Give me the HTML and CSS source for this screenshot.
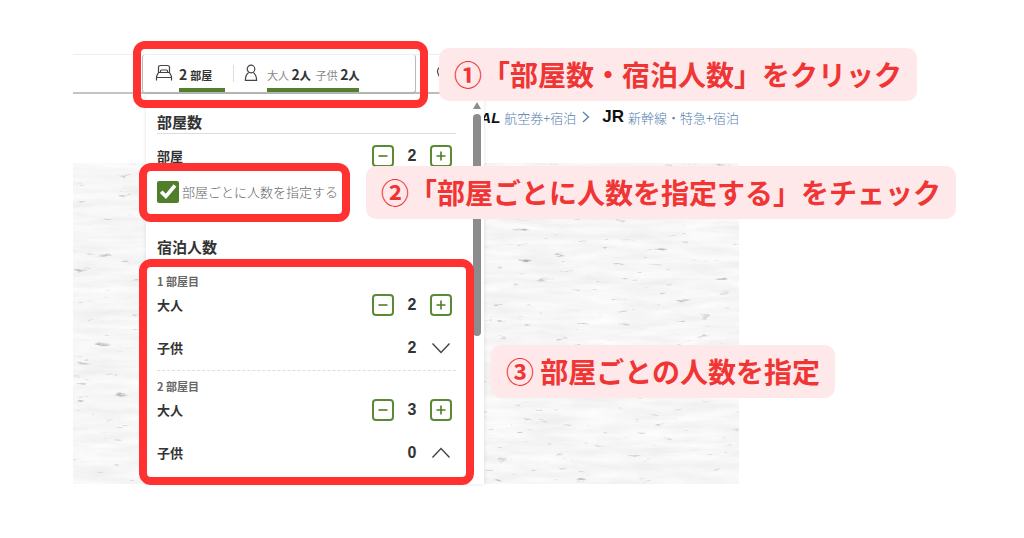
FILE: index.html
```html
<!DOCTYPE html>
<html lang="ja">
<head>
  <meta charset="UTF-8">
  <title>部屋数・宿泊人数の指定方法</title>
  <meta name="viewport" content="width=device-width, initial-scale=1.0">
  <link rel="stylesheet" href="styles.css">
</head>
<body>

  <main class="guide">
    <div class="site">
      <div class="search-bar">
        <button class="guest-field" type="button">
          <svg class="icon-bed" viewBox="0 0 18 18" width="18" height="18">
            <path d="M3.500 9V3.500Q3.500 1.500 5.500 1.500h7q2 0 2 2V9M5.500 8.500V7Q5.500 6 6.500 6h5q1 0 1 1v1.500M3.500 8.500h11l2 4v4M3.500 8.500l-2 4v4M1.500 13.500h15"/>
          </svg>
          <span class="rooms"><b>2</b> <strong>部屋</strong></span>
          <span class="divider"></span>
          <svg class="icon-person" viewBox="0 0 14 18" width="14" height="18">
            <circle cx="7" cy="5" r="3.800"/>
            <path d="M4.700 8.600Q1.400 11 1.400 16.400h11.200Q12.600 11 9.300 8.600"/>
          </svg>
          <span class="guests">大人 <b>2<strong>人</strong></b>&nbsp; 子供 <b>2<strong>人</strong></b></span>
        </button>
        <svg class="icon-pin" viewBox="0 0 14 18" width="14" height="18">
          <path d="M7 16.500Q1.500 9.500 1.500 6.500a5.500 5.500 0 0 1 11 0Q12.500 9.500 7 16.500z"/>
        </svg>
      </div>

      <nav class="plan-links">
        <a href="#"><b class="jal">JAL</b>航空券+宿泊
          <svg class="icon-next" viewBox="0 0 8 14" width="8" height="14"><path d="M1 2l5.500 5L1 12"/></svg>
        </a>
        <a href="#"><b class="jr">JR</b>新幹線・特急+宿泊</a>
      </nav>

      <svg class="wall" aria-hidden="true">
        <filter id="plaster" x="0" y="0" width="100%" height="100%" color-interpolation-filters="sRGB">
          <feTurbulence type="fractalNoise" baseFrequency="0.02 0.13" numOctaves="4" seed="8"/>
          <feColorMatrix type="matrix" values="0.08 0 0 0 0.925  0.08 0 0 0 0.925  0.08 0 0 0 0.925  0 0 0 0 1" result="base"/>
          <feTurbulence type="fractalNoise" baseFrequency="0.05 0.2" numOctaves="5" seed="21"/>
          <feColorMatrix type="matrix" values="0 0 0 0 0.65  0 0 0 0 0.65  0 0 0 0 0.65  4 0 0 0 -2.85" result="cracks"/>
          <feMerge>
            <feMergeNode in="base"/>
            <feMergeNode in="cracks"/>
          </feMerge>
        </filter>
        <rect width="100%" height="100%" filter="url(#plaster)"/>
      </svg>

      <section class="panel">
        <div class="panel-body">
          <h2>部屋数</h2>
          <div class="row">
            <span>部屋</span>
            <button class="step" type="button" aria-label="部屋を減らす"><svg viewBox="0 0 18 18"><path d="M4.500 9h9"/></svg></button>
            <output>2</output>
            <button class="step" type="button" aria-label="部屋を増やす"><svg viewBox="0 0 18 18"><path d="M4.500 9h9M9 4.500v9"/></svg></button>
          </div>
          <label class="check">
            <input type="checkbox" checked>
            <span>部屋ごとに人数を指定する</span>
          </label>

          <h2 class="guests-title">宿泊人数</h2>
          <div class="room">
            <h3>1 部屋目</h3>
            <div class="row adult">
              <span>大人</span>
              <button class="step" type="button" aria-label="大人を減らす"><svg viewBox="0 0 18 18"><path d="M4.500 9h9"/></svg></button>
              <output>2</output>
              <button class="step" type="button" aria-label="大人を増やす"><svg viewBox="0 0 18 18"><path d="M4.500 9h9M9 4.500v9"/></svg></button>
            </div>
            <div class="row">
              <span>子供</span>
              <output>2</output>
              <button class="toggle" type="button" aria-label="子供を開く"><svg viewBox="0 0 22 22"><path d="M2.500 6.500l8.500 9 8.500-9"/></svg></button>
            </div>
          </div>
          <div class="room">
            <h3>2 部屋目</h3>
            <div class="row adult">
              <span>大人</span>
              <button class="step" type="button" aria-label="大人を減らす"><svg viewBox="0 0 18 18"><path d="M4.500 9h9"/></svg></button>
              <output>3</output>
              <button class="step" type="button" aria-label="大人を増やす"><svg viewBox="0 0 18 18"><path d="M4.500 9h9M9 4.500v9"/></svg></button>
            </div>
            <div class="row">
              <span>子供</span>
              <output>0</output>
              <button class="toggle" type="button" aria-label="子供を閉じる"><svg viewBox="0 0 22 22"><path d="M2.500 15.500l8.500-9 8.500 9"/></svg></button>
            </div>
          </div>
        </div>
        <div class="scrollbar">
          <svg viewBox="0 0 8 7" width="8" height="7"><path d="M4 0l4 7H0z"/></svg>
          <div class="thumb"></div>
        </div>
      </section>
    </div>

    <!-- 赤枠 -->
    <div class="frame frame-1"></div>
    <div class="frame frame-2"></div>
    <div class="frame frame-3"></div>

    <!-- 説明 -->
    <p class="note note-1">①「部屋数・宿泊人数」をクリック</p>
    <p class="note note-2">②「部屋ごとに人数を指定する」をチェック</p>
    <p class="note note-3">③ 部屋ごとの人数を指定</p>
  </main>

</body>
</html>
```
FILE: styles.css
```css
* {
  box-sizing: border-box;
}

body {
  margin: 0;
  background-color: #fff;
  color: #333;
  font-family: "Noto Sans CJK JP", sans-serif;
}

h2, h3, p {
  margin: 0;
}

button {
  padding: 0;
  border: none;
  background: none;
  color: inherit;
  font-family: inherit;
}

svg {
  fill: none;
}

.guide {
  position: relative;
  display: flex;
  min-height: 100vh;
  padding: 54px 73px;
}

.site {
  position: relative;
  display: flex;
  flex-direction: column;
  width: 100%;
  max-width: 666px;
}

/* 検索バー */
.search-bar {
  display: flex;
  align-items: center;
  gap: 20px;
  height: 40px;
  padding-left: 69px;
  border-top: 1px solid #eee;
  border-bottom: 2px solid #c4c4c4;
}

.guest-field {
  display: flex;
  align-items: center;
  width: 274px;
  height: 40px;
  padding-left: 12px;
  border: 1px solid #bbb;
  border-top-color: #eee;
  border-bottom-width: 2px;
  border-radius: 4px;
}

.guest-field svg,
.icon-pin {
  stroke: #444;
  stroke-width: 1.2;
}

.guest-field b {
  color: #333;
  font-size: 14px;
}

.guest-field strong {
  font-size: 11px;
}

.rooms,
.guests {
  height: 37px;
  border-bottom: 4px solid #54802f;
  line-height: 38px;
  text-align: left;
  white-space: nowrap;
}

.rooms {
  width: 46px;
  margin-left: 6px;
}

.divider {
  width: 1px;
  height: 17px;
  margin: 0 10px 0 8px;
  background-color: #ddd;
}

.guests {
  margin-left: 9px;
  color: #888;
  font-size: 11px;
}

/* プランのリンク */
.plan-links {
  display: flex;
  justify-content: flex-end;
  gap: 12px;
  height: 69px;
  padding-top: 11px;
}

.plan-links a {
  display: flex;
  align-items: center;
  height: 24px;
  color: #5580b0;
  font-size: 13px;
  font-weight: 300;
  text-decoration: none;
  white-space: nowrap;
}

.plan-links b {
  margin-right: 4px;
  color: #111;
  font-family: "Liberation Sans", sans-serif;
  font-weight: bold;
}

.jal {
  font-size: 15px;
  font-style: italic;
}

.jr {
  font-size: 17px;
}

.icon-next {
  margin-left: 6px;
  stroke: #5580b0;
  stroke-width: 1.3;
}

.wall {
  display: block;
  flex: 1;
  width: 100%;
}

/* 人数パネル */
.panel {
  position: absolute;
  top: 40px;
  bottom: 0;
  left: 73px;
  display: flex;
  width: 338px;
  background-color: #fff;
  box-shadow: 0 0 4px rgba(0, 0, 0, 0.12);
}

.panel-body {
  flex: 1;
  padding: 17px 17px 0 11px;
}

.panel h2 {
  border-bottom: 1px solid #ddd;
  font-size: 15px;
  line-height: 22px;
}

.panel .guests-title {
  margin: 30px 0 8px;
  border-bottom: none;
}

.row {
  display: flex;
  align-items: center;
  height: 44px;
  padding-right: 4px;
  font-size: 13px;
  font-weight: bold;
}

.row span {
  flex: 1;
  padding-bottom: 2px;
}

.row output {
  width: 36px;
  font-family: "Liberation Sans", sans-serif;
  font-size: 16px;
  text-align: center;
}

.adult {
  height: 30px;
  margin-bottom: 6px;
}

.step {
  width: 22px;
  height: 22px;
  border: 2px solid #5b8a35;
  border-radius: 4px;
}

.step svg,
.toggle svg {
  display: block;
  width: 100%;
}

.step svg {
  stroke: #4d7d28;
  stroke-width: 1.6;
}

.toggle {
  width: 22px;
  height: 22px;
}

.toggle svg {
  stroke: #444;
  stroke-width: 1.4;
}

.check {
  display: flex;
  align-items: center;
  gap: 3px;
  height: 28px;
  color: #666;
  font-size: 13px;
  font-weight: 300;
}

.check span {
  padding-bottom: 2px;
}

.check input {
  width: 22px;
  height: 22px;
  margin: 0;
  border-radius: 2px;
  background-color: #4f7f2b;
  appearance: none;
}

.check input:checked::before {
  content: "";
  display: block;
  height: 100%;
  background-color: #fff;
  clip-path: polygon(13% 54%, 25% 43%, 40% 58%, 75% 15%, 88% 26%, 41% 82%);
}

.room {
  padding-top: 7px;
  border-bottom: 1px dashed #ddd;
}

.room:last-child {
  border-bottom: none;
}

.room h3 {
  margin-bottom: 1px;
  color: #666;
  font-size: 11px;
  line-height: 16px;
}

.scrollbar {
  display: flex;
  flex-direction: column;
  gap: 5px;
  width: 11px;
  padding-top: 8px;
}

.scrollbar svg {
  fill: #8c8c8c;
}

.thumb {
  width: 8px;
  height: 58%;
  border-radius: 4px;
  background-color: #8c8c8c;
}

/* 赤枠と説明 */
.frame {
  position: absolute;
  border: 8px solid #ff3131;
  border-radius: 12px;
}

.frame-1 {
  top: 41px;
  left: 133px;
  width: 295px;
  height: 67px;
}

.frame-2 {
  top: 163px;
  left: 139px;
  width: 211px;
  height: 59px;
}

.frame-3 {
  top: 259px;
  left: 139px;
  width: 335px;
  height: 226px;
}

.note {
  position: absolute;
  padding: 0 15px;
  border-radius: 10px;
  background-color: #ffe8e9;
  color: #f03535;
  font-size: 28px;
  font-weight: bold;
  line-height: 53px;
  white-space: nowrap;
}

.note-1 {
  top: 48px;
  left: 439px;
}

.note-2 {
  top: 166px;
  left: 366px;
}

.note-3 {
  top: 345px;
  left: 491px;
}
```
